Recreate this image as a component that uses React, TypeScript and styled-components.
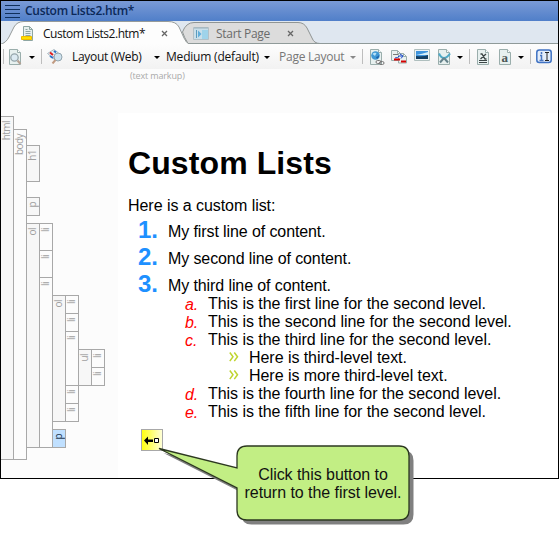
import React from "react";
import styled, { createGlobalStyle } from "styled-components";

const Global = createGlobalStyle`
  * { box-sizing: border-box; }
  body { margin: 0; background: #fff; }
  h1, p, ol, ul { margin: 0; padding: 0; font-weight: normal; }
  li { list-style: none; }
  svg { display: block; flex: none; }
`;

const ui = `"Open Sans", "Noto Sans", sans-serif`;
const arial = `"Liberation Sans", Arial, sans-serif`;

const Page = styled.div`
  position: relative;
  width: 559px;
  height: 535px;
  overflow: hidden;
`;

const Window = styled.div`
  display: flex;
  flex-direction: column;
  height: 479px;
  border: 1px solid #000;
  background: #fcfcfc;
  overflow: hidden;
`;

const TitleBar = styled.div`
  flex: none;
  display: flex;
  align-items: center;
  gap: 5px;
  height: 20px;
  padding-left: 4px;
  background: linear-gradient(#7a9ad6, #507fc9);
`;

const Label = styled.span<{ $w?: number; $ls?: number; $color?: string; $bold?: boolean }>`
  flex: none;
  width: ${(p) => (p.$w ? `${p.$w}px` : "auto")};
  font: ${(p) => (p.$bold ? 600 : 400)} 12px/16px ${ui};
  letter-spacing: ${(p) => p.$ls ?? 0}px;
  color: ${(p) => p.$color ?? "#111"};
  white-space: nowrap;
`;

const TabStrip = styled.div`
  flex: none;
  position: relative;
  display: flex;
  height: 23px;
  background: #dfe7f0;
`;

const TabShapes = styled.svg`
  position: absolute;
  inset: 0;
`;

const Tab = styled.div<{ $w: number; $pad: number; $gap: number }>`
  position: relative;
  display: flex;
  align-items: center;
  gap: ${(p) => p.$gap}px;
  width: ${(p) => p.$w}px;
  padding: 2px 0 0 ${(p) => p.$pad}px;
`;

const Toolbar = styled.div`
  flex: none;
  display: flex;
  align-items: center;
  height: 25px;
  padding-left: 2px;
  background: linear-gradient(#fdfdfd, #f2f2f2);
`;

const Separator = styled.i`
  flex: none;
  width: 1px;
  height: 15px;
  background: #bdbdbd;
`;

const Gap = styled.i<{ $w: number }>`
  flex: none;
  width: ${(p) => p.$w}px;
`;

const Caret = styled.i<{ $dim?: boolean }>`
  flex: none;
  margin-top: 1px;
  border: solid transparent;
  border-width: 3px 3px 0;
  border-top-color: ${(p) => (p.$dim ? "#888" : "#000")};
`;

const Workspace = styled.div`
  flex: 1;
  display: flex;
`;

const TreePane = styled.div`
  flex: none;
  width: 117px;
  padding-top: 47px;
`;

const Node = styled.div<{ $top: number }>`
  display: flex;
  align-items: flex-start;
  margin-top: ${(p) => p.$top}px;
`;

const Bar = styled.div<{ $h: number; $shade: boolean; $active?: boolean; $root?: boolean }>`
  flex: none;
  width: 14px;
  height: ${(p) => p.$h + 1}px;
  margin: 0 -1px -1px ${(p) => (p.$root ? "-1px" : "0")};
  padding-top: 4px;
  border: 1px solid #a8a8a8;
  background: ${(p) => (p.$active ? "#c0e0ff" : p.$shade ? "#f7f7f7" : "#fcfcfc")};
  color: ${(p) => (p.$active ? "#1f3850" : "#a0a0a0")};
`;

const BarText = styled.span`
  display: block;
  width: 11px;
  writing-mode: vertical-rl;
  transform: rotate(180deg);
  font: 10px/11px ${ui};
  letter-spacing: -0.55px;
  text-align: right;
`;

const Children = styled.div`
  display: flex;
  flex-direction: column;
`;

type TreeNode = { tag: string; h: number; top?: number; active?: boolean; kids?: TreeNode[] };

const li = (h: number, kids?: TreeNode[]): TreeNode => ({ tag: "li", h, kids });

const tree: TreeNode = {
  tag: "html",
  h: 343,
  kids: [
    {
      tag: "body",
      top: 13,
      h: 330,
      kids: [
        { tag: "h1", top: 16, h: 36 },
        { tag: "p", top: 16, h: 18 },
        {
          tag: "ol",
          top: 8,
          h: 224,
          kids: [
            li(27),
            li(27),
            li(170, [
              {
                tag: "ol",
                top: 18,
                h: 126,
                kids: [
                  li(18),
                  li(18),
                  li(54, [{ tag: "ul", top: 18, h: 36, kids: [li(18), li(18)] }]),
                  li(18),
                  li(18),
                ],
              },
              { tag: "p", top: 8, h: 18, active: true },
            ]),
          ],
        },
      ],
    },
  ],
};

function TreeBranch({ node, depth = 0 }: { node: TreeNode; depth?: number }) {
  return (
    <Node $top={node.top ?? 0}>
      <Bar $h={node.h} $shade={depth % 2 === 0} $active={node.active} $root={depth === 0}>
        <BarText>{node.tag}</BarText>
      </Bar>
      {node.kids && (
        <Children>
          {node.kids.map((kid, i) => (
            <TreeBranch key={i} node={kid} depth={depth + 1} />
          ))}
        </Children>
      )}
    </Node>
  );
}

const EditorPane = styled.div`
  flex: 1;
  display: flex;
  flex-direction: column;
`;

const MarkupHint = styled.div`
  height: 44px;
  padding-left: 12px;
  font: 9px/14px ${ui};
  letter-spacing: -0.15px;
  color: #aaa;
`;

const Document = styled.div`
  flex: 1;
  padding: 32px 0 0 10px;
  background: #fff;
  color: #000;
  font: 16px/18px ${arial};
  letter-spacing: -0.05px;
`;

const Heading = styled.h1`
  font: bold 32px/36px ${arial};
  letter-spacing: 0.1px;
  margin-bottom: 16px;
`;

const Intro = styled.p`
  margin-bottom: 8px;
`;

const Item = styled.li<{ $indent: number; $after?: number }>`
  display: flex;
  height: 18px;
  padding-left: ${(p) => p.$indent}px;
  margin-bottom: ${(p) => p.$after ?? 0}px;
  white-space: nowrap;
`;

const TopItem = styled(Item)`
  letter-spacing: -0.1px;
`;

const Ordinal = styled.b`
  width: 30px;
  color: #1e90ff;
  font-size: 24px;
  line-height: 13px;
`;

const Letter = styled.i`
  width: 23px;
  color: #f00;
  line-height: 20px;
`;

const Chevron = styled.svg`
  width: 20px;
  height: 18px;
  fill: none;
  stroke: #bfd42f;
  stroke-width: 1.5;
`;

const ReturnButton = styled.button`
  display: block;
  width: 22px;
  height: 22px;
  margin: 8px 0 0 13px;
  padding: 0;
  border: 1px solid #a8a8a8;
  background: linear-gradient(90deg, #ffff10, #ffffd8);
`;

const Callout = styled.div`
  position: absolute;
  left: 150px;
  top: 440px;
  width: 270px;
  height: 90px;
`;

const CalloutText = styled.div`
  position: absolute;
  left: 87px;
  top: 26px;
  width: 172px;
  text-align: center;
  white-space: nowrap;
  font: 16px/18px ${arial};
  letter-spacing: -0.05px;
  color: #111;
`;

const bubble =
  "M159 448.500L237 468V456Q237 446 247 446H399Q409 446 409 456V510Q409 520 399 520H247Q237 520 237 510V488Z";

const DocShape = () => (
  <>
    <path d="M.5.5h8l3 3v12H.5z" fill="#e7f0ef" stroke="#9aaeac" />
    <path d="M8.500.5v3h3" fill="#fff" stroke="#9aaeac" />
  </>
);

const CloseIcon = () => (
  <svg width="7" height="7" viewBox="0 0 7 7">
    <path d="M1 1l5 5M6 1L1 6" stroke="#666" strokeWidth="1.3" />
  </svg>
);

const letters = ["a.", "b.", "c.", "d.", "e."];
const ordinals = ["first", "second", "third", "fourth", "fifth"];

const second = (i: number) => (
  <Item key={i} $indent={57}>
    <Letter>{letters[i]}</Letter>This is the {ordinals[i]} line for the second level.
  </Item>
);

const third = (text: string) => (
  <Item $indent={101}>
    <Chevron viewBox="0 0 20 18">
      <path d="M.8 3.500l3.200 4.300-3.200 4.300M5.300 3.500l3.200 4.300-3.200 4.300" />
    </Chevron>
    {text}
  </Item>
);

export default function App() {
  return (
    <Page>
      <Global />
      <Window>
        <TitleBar>
          <svg width="15" height="14" viewBox="0 0 15 14">
            <path d="M0 1.500h15M0 5.500h15M0 9.500h15M0 13.500h15" stroke="#10305c" />
          </svg>
          <Label $bold $color="#0b2857" $ls={-0.3}>Custom Lists2.htm*</Label>
        </TitleBar>

        <TabStrip>
          <TabShapes width="557" height="23" viewBox="1 21 557 23">
            <path d="M188 43.500Q184 37 182.500 32Q186 22.500 194 22.500H298Q304 22.500 307 28L312 38Q314 43.500 320 43.500" fill="#dcdcdc" stroke="#8f9493" />
            <path d="M188 43.500H558" stroke="#8f9a99" />
            <path d="M0 44.500Q6 43 9 37L14 27Q17 21.500 24 21.500H168Q176 21.500 179 27L184 38Q186 43 190 44.500" fill="#fdfdfd" stroke="#969b9a" />
          </TabShapes>
          <Tab $w={187} $pad={20} $gap={9}>
            <svg width="13" height="16" viewBox="0 0 13 16">
              <path d="M2.500.5h6l3 3v11h-9z" fill="#e7f0ef" stroke="#8ea6a3" />
              <path d="M8.500.5v3h3M4.500 3.500h2M4.500 5.500h5M4.500 7.500h5M4.500 9.500h5" fill="none" stroke="#8ea6a3" />
              <path d="M.5 10.500h10v3H.5z" fill="#ffdf00" stroke="#efbd00" />
            </svg>
            <Label $w={109} $ls={-0.48}>Custom Lists2.htm*</Label>
            <CloseIcon />
          </Tab>
          <Tab $w={130} $pad={5} $gap={7}>
            <svg width="16" height="13" viewBox="0 0 16 13">
              <path d="M.5.5h15v12H.5z" fill="#c9dfea" stroke="#b3c0c6" />
              <path d="M1 1h14" stroke="#9cb2bc" />
              <path d="M3.500 3v8" stroke="#5c9bbd" />
              <path d="M5 3.500v7L8.500 7z" fill="#5faeda" />
              <path d="M9 3h6v9H9z" fill="#9fd3ea" />
            </svg>
            <Label $w={64} $color="#6b6b6b" $ls={-0.3}>Start Page</Label>
            <CloseIcon />
          </Tab>
        </TabStrip>

        <Toolbar>
          <Separator />
          <Gap $w={5} />
          <svg width="15" height="16" viewBox="0 0 15 16">
            <DocShape />
            <circle cx="5.500" cy="8.500" r="3.700" fill="#dceaf2" stroke="#95a5ab" strokeWidth="1.300" />
            <path d="M8.500 11.500l3 3.500" stroke="#b6a092" strokeWidth="2" />
          </svg>
          <Gap $w={5} />
          <Caret />
          <Gap $w={6} />
          <Separator />
          <Gap $w={5} />
          <svg width="17" height="15" viewBox="0 0 17 15">
            <path d="M.5 4.500L7 .5l4 3-3.500 7z" fill="#e8eef2" stroke="#aabac2" />
            <path d="M3 3.500l3 2.500M7 7l2 2" stroke="#e02020" strokeWidth="2" />
            <path d="M7 2l2 1.500M3 7l3 2" stroke="#2a73c8" strokeWidth="2" />
            <circle cx="11" cy="8" r="4" fill="#cfe2ee" stroke="#91a4ad" />
            <path d="M8.500 11l-3 3.500" stroke="#c09b82" strokeWidth="2" />
          </svg>
          <Gap $w={8} />
          <Label $w={82} $ls={-0.3}>Layout (Web)</Label>
          <Caret />
          <Gap $w={6} />
          <Label $w={98} $ls={-0.2}>Medium (default)</Label>
          <Caret />
          <Gap $w={9} />
          <Label $w={71} $color="#777" $ls={-0.25}>Page Layout</Label>
          <Caret $dim />
          <Gap $w={6} />
          <Separator />
          <Gap $w={7} />
          <svg width="15" height="16" viewBox="0 0 15 16">
            <DocShape />
            <circle cx="5.500" cy="6.500" r="4.300" fill="#3f98d5" />
            <path d="M2.500 5Q4 3 6.500 4L5 7z" fill="#b8e1f7" />
            <path d="M6 8Q8 8 8.500 6L9 8 7 10z" fill="#1d5fa8" />
            <rect x="6" y="11.500" width="5" height="3" rx="1.500" fill="#eee" stroke="#777" />
            <rect x="9.500" y="12.500" width="4.500" height="3" rx="1.500" fill="none" stroke="#777" />
          </svg>
          <Gap $w={6} />
          <svg width="17" height="14" viewBox="0 0 17 14">
            <path d="M.5.5h6l3 3v7h-9zM6.500.5v3h3" fill="#e9f1f0" stroke="#9aaeac" />
            <path d="M7.500 3.500h5l3 3v6.500h-8zM12.500 3.500v3h3" fill="#e9f1f0" stroke="#9aaeac" />
            <path d="M2 4.500h5" stroke="#777" />
            <path d="M4 8Q7 8 8 6h3M9 4l3 2-2 2.500" stroke="#1746c8" fill="none" />
            <path d="M3 9.500h6M10 11.500h5" stroke="#d50000" strokeWidth="2" />
          </svg>
          <Gap $w={6} />
          <svg width="16" height="16" viewBox="0 0 16 16">
            <path d="M.5.5h15v11H.5z" fill="#eff3f3" stroke="#afbfbe" />
            <path d="M2 2h12v8H2z" fill="#3f94dd" />
            <path d="M2 6q6-1 12-3v3H2z" fill="#d5eff9" />
            <path d="M2 7q8 1 12-1v4H2z" fill="#153f62" />
          </svg>
          <Gap $w={8} />
          <svg width="13" height="16" viewBox="0 0 13 16">
            <DocShape />
            <path d="M1 4.500q2 4.500 5 4.500t6-4.500" fill="none" stroke="#4fa9c6" strokeWidth="2" />
            <path d="M6 9l-4 4.500M6 9l4 4.500" stroke="#66828b" strokeWidth="2" />
          </svg>
          <Gap $w={6} />
          <Caret />
          <Gap $w={6} />
          <Separator />
          <Gap $w={7} />
          <svg width="13" height="16" viewBox="0 0 13 16">
            <DocShape />
            <path d="M3.500 5h1.500l3 5h1.500M9 5L3.500 10" fill="none" stroke="#3c4545" strokeWidth="1.300" />
            <path d="M2 11.500h8M2 13.500h8" stroke="#3c4545" />
          </svg>
          <Gap $w={9} />
          <svg width="13" height="16" viewBox="0 0 13 16">
            <DocShape />
            <text x="2.500" y="13" fontFamily="Liberation Serif" fontWeight="bold" fontSize="13" fill="#4b5555">a</text>
          </svg>
          <Gap $w={6} />
          <Caret />
          <Gap $w={6} />
          <Separator />
          <Gap $w={5} />
          <svg width="16" height="16" viewBox="0 0 16 16">
            <rect x=".8" y="1" width="14.400" height="12.400" rx="2.500" fill="#e4edf9" stroke="#3f72c3" strokeWidth="1.500" />
            <path d="M4 6.500h1.500v5M3.500 11.500h4M5.500 3v2" fill="none" stroke="#4a76c0" strokeWidth="1.500" />
            <path d="M9 3.500h4M11 3.500v8M9 11.500h4" stroke="#222" />
          </svg>
        </Toolbar>

        <Workspace>
          <TreePane>
            <TreeBranch node={tree} />
          </TreePane>
          <EditorPane>
            <MarkupHint>(text markup)</MarkupHint>
            <Document>
              <Heading>Custom Lists</Heading>
              <Intro>Here is a custom list:</Intro>
              <ol>
                <TopItem $indent={10} $after={9}><Ordinal>1.</Ordinal>My first line of content.</TopItem>
                <TopItem $indent={10} $after={9}><Ordinal>2.</Ordinal>My second line of content.</TopItem>
                <TopItem $indent={10}><Ordinal>3.</Ordinal>My third line of content.</TopItem>
                {[0, 1, 2].map(second)}
                {third("Here is third-level text.")}
                {third("Here is more third-level text.")}
                {[3, 4].map(second)}
              </ol>
              <ReturnButton aria-label="Return to the first level">
                <svg width="20" height="20" viewBox="0 0 20 20">
                  <path d="M2 10.500l4-4v3h5v2.500H6v3z" fill="#000" />
                  <path d="M12.500 8.500h4v4h-4z" fill="#fff" stroke="#000" />
                </svg>
              </ReturnButton>
            </Document>
          </EditorPane>
        </Workspace>
      </Window>

      <Callout>
        <svg width="270" height="90" viewBox="150 440 270 90">
          <path transform="translate(4.500 4.500)" d={bubble} fill="#808080" />
          <path d={bubble} fill="#c2ee84" stroke="#2c3820" strokeWidth="1.300" />
        </svg>
        <CalloutText>
          Click this button to
          <br />
          return to the first level.
        </CalloutText>
      </Callout>
    </Page>
  );
}
